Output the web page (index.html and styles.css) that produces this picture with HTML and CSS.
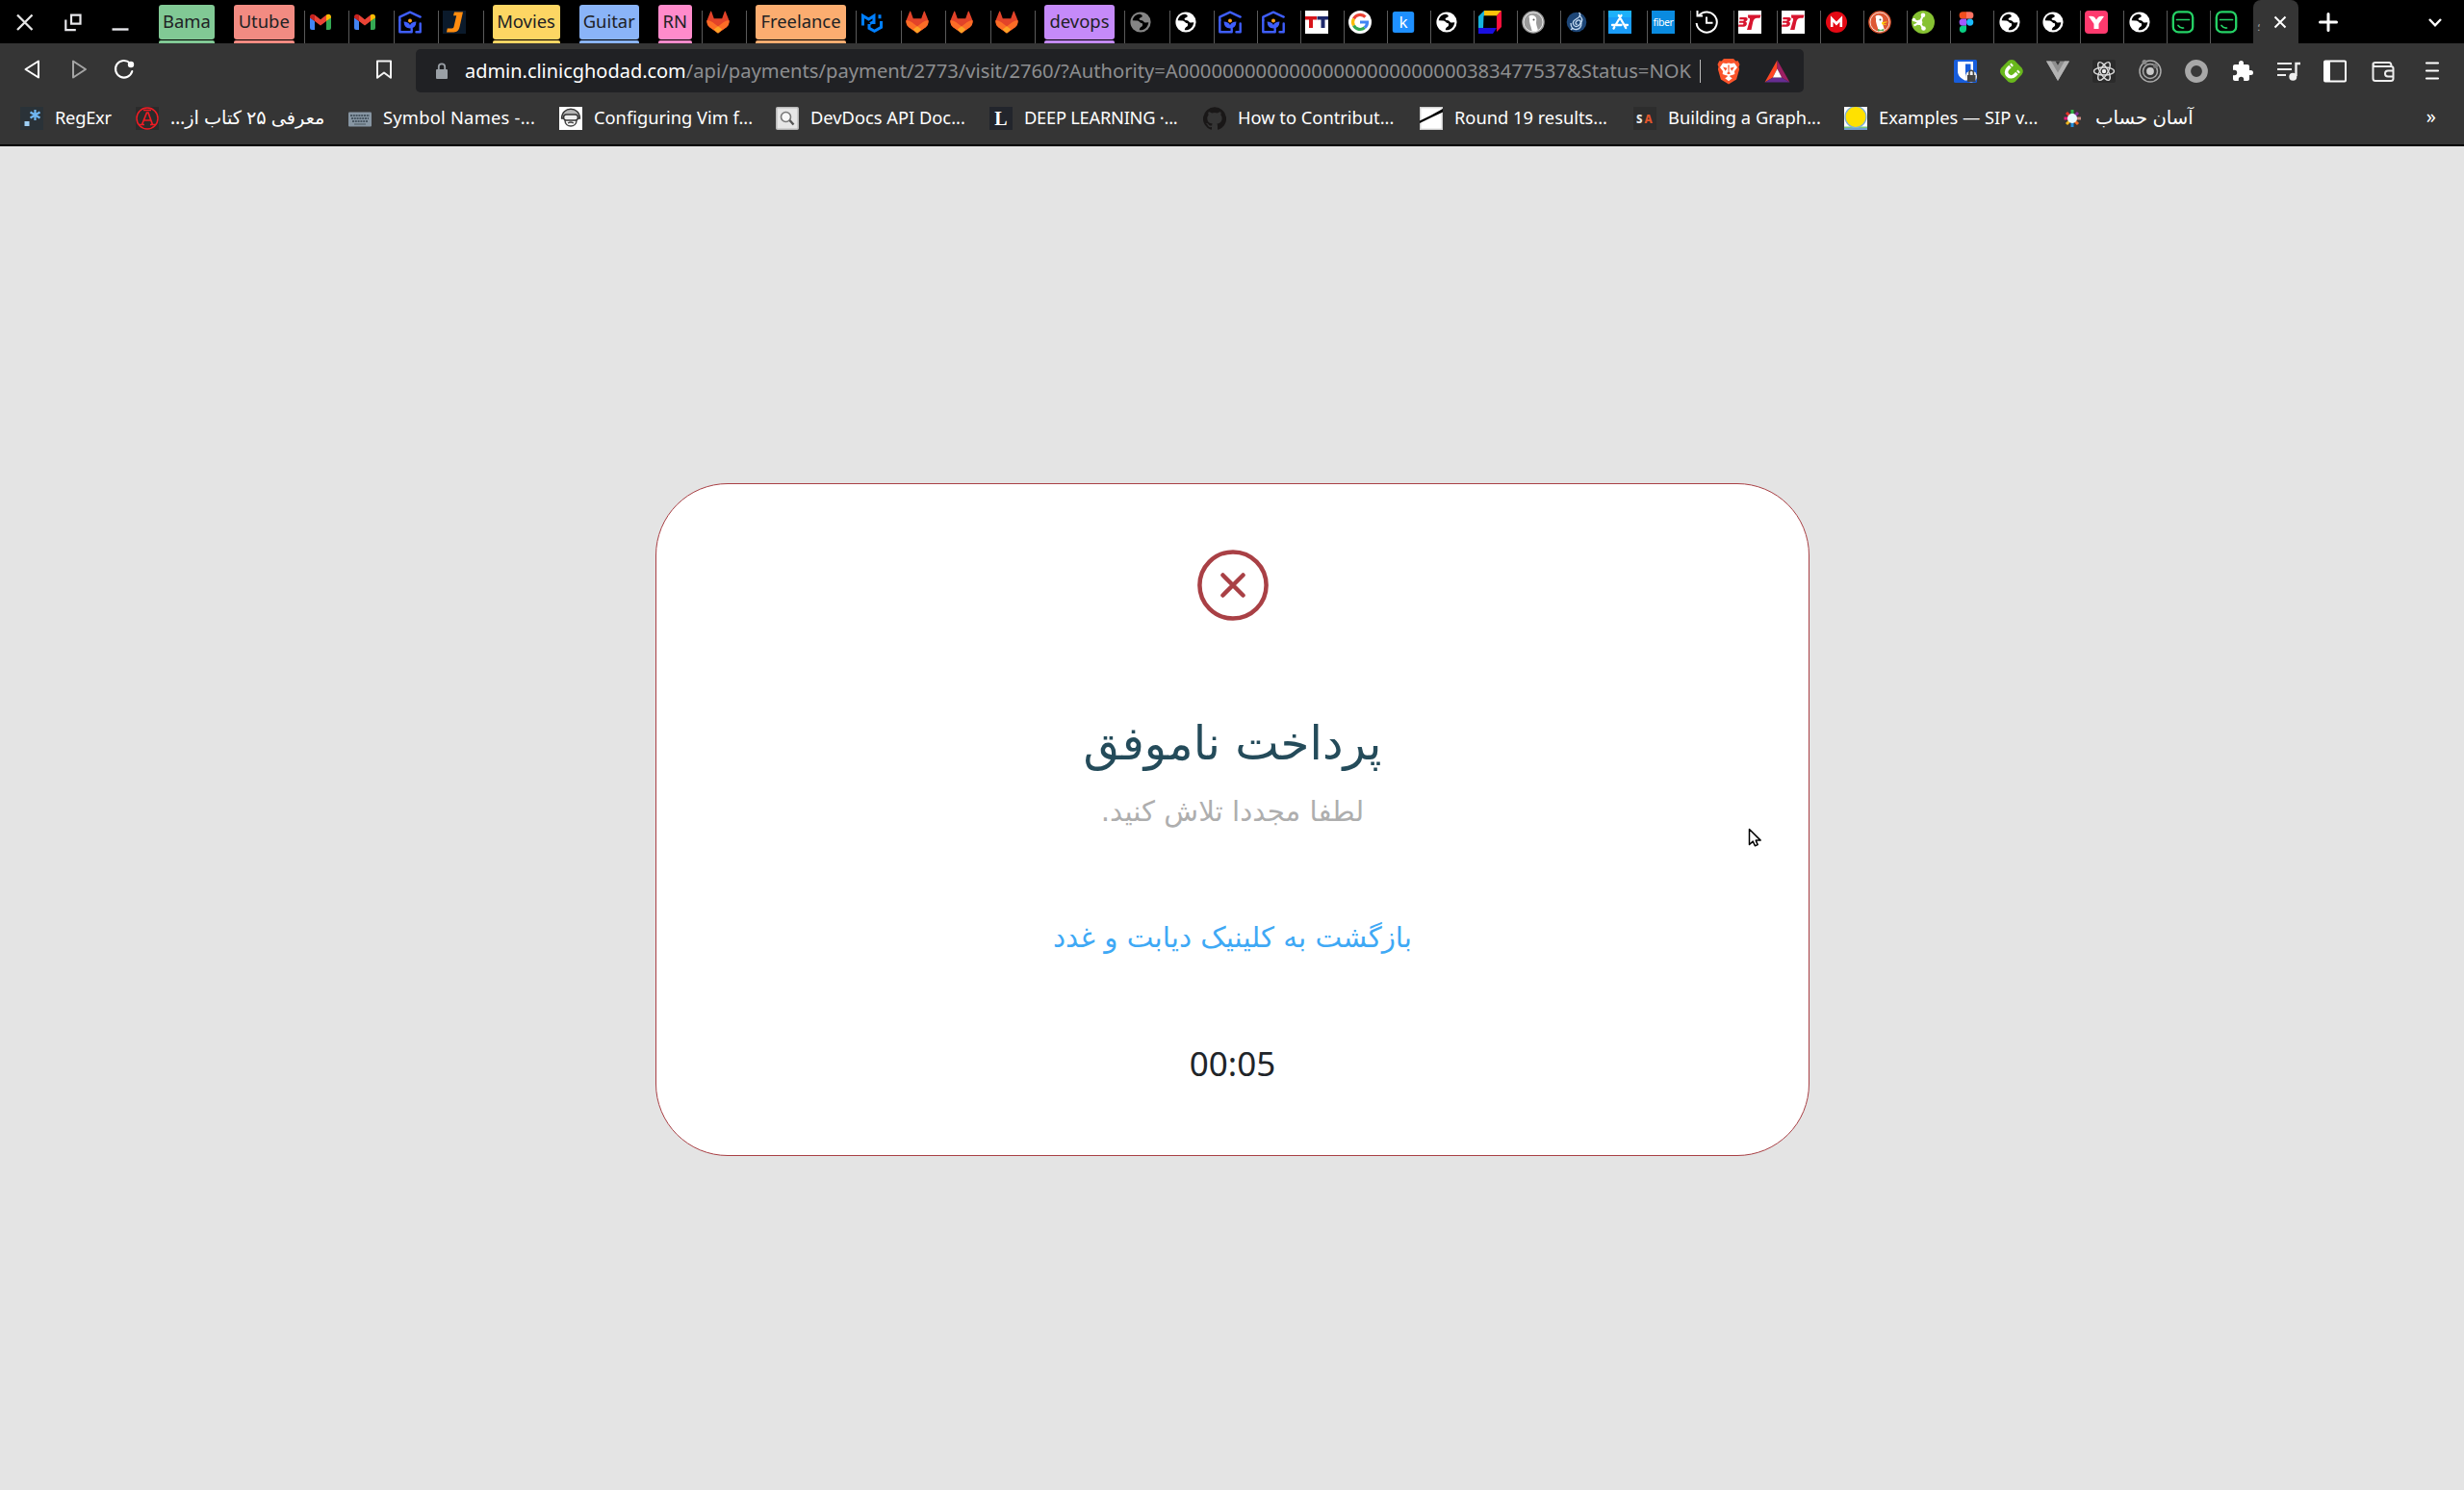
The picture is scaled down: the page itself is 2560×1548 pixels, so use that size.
FILE: index.html
```html
<!DOCTYPE html>
<html lang="en">
<head>
<meta charset="utf-8">
<title>پرداخت ناموفق</title>
<link rel="stylesheet" href="styles.css">
</head>
<body>
<svg class="sprite" aria-hidden="true">
  <symbol id="gmail" viewBox="0 0 24 24">
    <path fill="#4285f4" d="M1 7l5 4v9H3a2 2 0 0 1-2-2z"/>
    <path fill="#34a853" d="M18 11l5-4v11a2 2 0 0 1-2 2h-3z"/>
    <path fill="#c5221f" d="M1 6.5C1 4 4 3 6 4.6V11L1 7.4z"/>
    <path fill="#ea4335" d="M6 4.6l6 4.6 6-4.6V11l-6 4.6L6 11z"/>
    <path fill="#fbbc04" d="M18 4.6C20 3 23 4 23 6.5v.9L18 11z"/>
  </symbol>
  <symbol id="house" viewBox="0 0 24 24">
    <g fill="none" stroke="#3f5efb" stroke-width="2.4" stroke-linecap="round" stroke-linejoin="round">
      <path d="M1.300 10V6.600L12 1.600l10.700 5"/>
      <path d="M22.700 13.500v8.800h-4.200M1.300 10v12.300h12.400v-3.600"/>
    </g>
    <path fill="#3f5efb" d="M5.500 11.500q5 0 6.500 3.600 1.500-3.600 6.500-3.600-.5 7-6.500 7t-6.500-7z"/>
    <circle cx="12" cy="10.500" r="2" fill="#ff9f1c"/>
  </symbol>
  <symbol id="gitlab" viewBox="0 0 24 24">
    <path fill="#e24329" d="M.6 10L4.300.8Q4.800.2 5.200 1l2.600 7.200h8.400L18.800 1q.4-.8.9-.2L23.400 10q1 4-2.600 7.200L12 23.500l-8.800-6.300Q-.4 14 .6 10z"/>
    <path fill="#fc6d26" d="M.6 10q3.400.2 6 2.300L12 16.400l5.400-4.100q2.600-2.100 6-2.300 1 4.200-2.600 7.200L12 23.500l-8.800-6.300Q-.4 14 .6 10z"/>
    <path fill="#fca326" d="M7.800 19.500L12 16.300l4.200 3.200-4.200 4q-2-1.500-4.200-4z"/>
  </symbol>
  <symbol id="globe" viewBox="0 0 24 24">
    <circle cx="12" cy="12" r="10.600" fill="currentColor"/>
    <path fill="#000" d="M10.200 3.800C7 4 4.300 7 3.700 10.300l4.500.2c2.600 0 3 2.500 5 2.500.8 0 1 1 .9 2-.2 2-3 1.800-3.300 5.200 5 .6 9.200-3.400 9.500-8l-3.300.4c-1.800 0-1.600-2.200-3.500-2.300-2 0-3-.5-2.900-1.700.1-1.500 3-1 3.200-3.200-.2-1-1.800-1.600-3.600-1.600z"/>
  </symbol>
  <symbol id="bt" viewBox="0 0 24 24">
    <path fill="#fff" d="M0 0h24v24H0z"/>
    <path fill="#d8152f" d="M10 4.500h13.500l-1 3.200h-2.700c-2.500 0-3.800 1.600-4.500 4L13.500 20H9l2.700-9c.5-1.800 1-3.300-1.500-3.300zM1.500 7h6.300c3 0 2.200 4-.4 4.400 2.800.6 1.400 5.300-1.600 5.300H0l.4-2.200h4.200c1 0 1-1.700 0-1.700H.8l.4-2H5c1 0 1.200-1.600.2-1.600H1.200z"/>
  </symbol>
  <symbol id="chat" viewBox="0 0 24 24">
    <rect x="1.800" y="1.400" width="20.400" height="21" rx="5.500" fill="#000" stroke="#25d366" stroke-width="2.300"/>
    <path fill="none" stroke="#25d366" stroke-width="1.700" stroke-linecap="round" d="M5.500 9.500h13M7 15.500q2 2.800 5.500 2.500"/>
  </symbol>
  <symbol id="duck" viewBox="0 0 24 24">
    <circle cx="12" cy="12" r="11.800" fill="currentColor"/>
    <circle cx="12" cy="12" r="10" fill="none" stroke="#fff" stroke-opacity=".8"/>
    <path fill="#fff" d="M7.500 6c2-2 6-1.600 7.500 1.600.8 2-.2 4 .1 6 .3 2.500 1.400 4.500 1.700 6.600-2 1.200-4 1.600-6 1.200C9.500 16 7.500 12 8 8.500z"/>
    <circle cx="12.500" cy="9.500" r="1" fill="#555"/>
  </symbol>
</svg>

<header class="browser">
  <nav class="tabstrip">
    <div class="window-buttons">
      <svg class="wbtn" viewBox="0 0 20 20"><path d="M2 2.500l15.500 15.500M17.500 2.500L2 18" stroke="#e6e6e6" stroke-width="2.300"/></svg>
      <svg class="wbtn" viewBox="0 0 20 20"><path d="M8 2.700h9.500v9H8zM2.300 7.500v10.700h10.500" fill="none" stroke="#e6e6ea" stroke-width="2.200"/></svg>
      <svg class="wbtn" viewBox="0 0 20 20"><path d="M1.500 17.500h17" stroke="#e6e6ea" stroke-width="2.400"/></svg>
    </div>
    <div class="group green"><span class="label w58">Bama</span></div>
    <div class="group red"><span class="label w63">Utube</span></div>
    <div class="tab wide"><svg class="fav"><use href="#gmail"/></svg></div>
    <div class="tab wide"><svg class="fav"><use href="#gmail"/></svg></div>
    <div class="tab wide"><svg class="fav"><use href="#house"/></svg></div>
    <div class="tab wide"><svg class="fav" viewBox="0 0 24 24"><path fill="#0b1a2b" d="M0 0h24v24H0z"/><path fill="#ff8c0f" d="M12 1.500h9L17.500 17c-1 4.500-3.500 5.500-7.500 5.500H4l.8-4h4.500c1.500 0 2-.7 2.400-2.500l2.500-10.700H11z"/></svg></div>
    <div class="group yellow divided"><span class="label w70">Movies</span></div>
    <div class="group blue"><span class="label w63">Guitar</span></div>
    <div class="group pink"><span class="label w35">RN</span></div>
    <div class="tab wide"><svg class="fav"><use href="#gitlab"/></svg></div>
    <div class="group orange divided"><span class="label w94">Freelance</span></div>
    <div class="tab wide"><svg class="fav" viewBox="0 0 24 24"><path fill="none" stroke="#007fff" stroke-width="3" d="M2.500 15.500V5.500l6 3.600 5.500-3.600v8.500M9 14v4.300l5.500 3 7-4V11M20 4.200v4M10 13.500l4-2.200"/></svg></div>
    <div class="tab wide"><svg class="fav"><use href="#gitlab"/></svg></div>
    <div class="tab wide"><svg class="fav"><use href="#gitlab"/></svg></div>
    <div class="tab wide"><svg class="fav"><use href="#gitlab"/></svg></div>
    <div class="group purple divided"><span class="label w73">devops</span></div>
    <div class="tab wide"><svg class="fav dim"><use href="#globe"/></svg></div>
    <div class="tab wide"><svg class="fav"><use href="#globe"/></svg></div>
    <div class="tab"><svg class="fav"><use href="#house"/></svg></div>
    <div class="tab"><svg class="fav"><use href="#house"/></svg></div>
    <div class="tab"><svg class="fav" viewBox="0 0 24 24"><path fill="#fff" d="M0 0h24v24H0z"/><path fill="#d7141a" d="M0 6h12v3.500H8V18H4V9.500H0z"/><path fill="#1f2a6b" d="M12.500 6H24v3.500h-3.500V18h-4V9.500h-4z"/></svg></div>
    <div class="tab"><svg class="fav" viewBox="0 0 24 24"><circle cx="12" cy="12" r="12" fill="#fff"/><g fill="none" stroke-width="3.200"><path stroke="#ea4335" d="M5.500 8.400A7.500 7.500 0 0 1 17.500 6.700"/><path stroke="#fbbc05" d="M5.500 15.600a7.500 7.500 0 0 1 0-7.200"/><path stroke="#34a853" d="M16.800 17.800A7.500 7.500 0 0 1 5.500 15.600"/><path stroke="#4285f4" d="M12 12h7.500a7.500 7.500 0 0 1-2.700 5.800"/></g></svg></div>
    <div class="tab"><svg class="fav" viewBox="0 0 24 24"><rect x=".8" y="1" width="22.400" height="22" rx="2.500" fill="#1e90ff"/><text x="12" y="18" text-anchor="middle" font-size="17" fill="#fff">k</text></svg></div>
    <div class="tab"><svg class="fav"><use href="#globe"/></svg></div>
    <div class="tab"><svg class="fav" viewBox="0 0 24 24"><path fill="#ffc20a" d="M6 0h18l-5 5.500H6z"/><path fill="#ff0f3c" d="M24 0v17l-5 5V5.500z"/><path fill="#16b3dc" d="M0 6l6-6v5.500L5 18H0z"/><path fill="#1a0fe0" d="M0 18h19l-4 6H0z"/><path fill="#000" d="M5.500 5.500h13V18h-13z"/></svg></div>
    <div class="tab"><svg class="fav duck-dim"><use href="#duck"/></svg></div>
    <div class="tab"><svg class="fav" viewBox="0 0 24 24"><circle cx="12" cy="12" r="10.300" fill="#1d4677"/><path fill="none" stroke="#c6dcf2" stroke-width="1.300" d="M14.500 2c3 3 0 5-2.500 6.500S7 12 9 15s6 1 7-2-2-4-4-2-1 4 1 3M14.500 5c3 2 4 5 2 8M6 13c0 4 2 7 6 6.500s5-4 5-7M8 18l-2 2"/></svg></div>
    <div class="tab"><svg class="fav" viewBox="0 0 24 24"><path fill="#1a9cf8" d="M0 0h24v24H0z"/><path fill="#1fbffb" d="M0 0h24v7H0z" opacity=".6"/><path fill="none" stroke="#fff" stroke-width="2.300" stroke-linecap="round" d="M13.500 5L7.800 14.500M10.800 5l7.400 13M4 15h9.500M17.500 15H20M6.300 17.200l-.8 1.400"/></svg></div>
    <div class="tab"><svg class="fav" viewBox="0 0 24 24"><path fill="#0a8be0" d="M0 0h24v24H0z"/><text x="12" y="16" text-anchor="middle" font-size="10.500" letter-spacing="-.4" fill="#fff">fiber</text></svg></div>
    <div class="tab"><svg class="fav" viewBox="0 0 24 24"><path fill="none" stroke="#fff" stroke-width="2" d="M4.200 5A10.600 10.600 0 1 1 1.600 13M2.500 0v5.500H8M12 6.500v6.200h6.500"/></svg></div>
    <div class="tab"><svg class="fav"><use href="#bt"/></svg></div>
    <div class="tab"><svg class="fav"><use href="#bt"/></svg></div>
    <div class="tab"><svg class="fav" viewBox="0 0 24 24"><circle cx="12" cy="12" r="11" fill="#e50914"/><path fill="none" stroke="#fff" stroke-width="2.600" d="M7.200 17V8.500l4.800 5 4.800-5V17"/></svg></div>
    <div class="tab"><svg class="fav duck-red" viewBox="0 0 24 24"><use href="#duck"/><path fill="#fdd20a" d="M14 12.200c2-.6 4-1 6-.6-1 1.200-3 1.500-4.500 1.700 1 .7 2.500.6 3.500 1.200-2 .7-4.500.3-5-.8z"/><path fill="#4caf50" d="M10 19l3 1 3-1v2.500l-3-.8-3 .8z"/></svg></div>
    <div class="tab"><svg class="fav" viewBox="0 0 24 24"><circle cx="12" cy="12" r="12" fill="#86c232"/><path stroke="#fff" stroke-width="2" fill="none" d="M12 5L8.500 12.500l4 6.500M1.500 9.500l7 3-6 3"/><g fill="#fff"><circle cx="12" cy="4.800" r="2.300"/><circle cx="12.500" cy="18.500" r="2.300"/><circle cx="8.500" cy="12.300" r="2.800"/><circle cx="2.500" cy="9.500" r="1.800"/></g></svg></div>
    <div class="tab"><svg class="fav" viewBox="0 0 24 24"><path fill="#f24e1e" d="M12 1.300H8.200a3.600 3.600 0 0 0 0 7.200H12z"/><path fill="#ff7262" d="M12 1.300h3.800a3.600 3.600 0 0 1 0 7.200H12z"/><path fill="#a259ff" d="M12 8.500H8.200a3.600 3.600 0 0 0 0 7.200H12z"/><circle cx="15.700" cy="12.100" r="3.600" fill="#1abcfe"/><path fill="#0acf83" d="M12 15.700H8.200a3.600 3.600 0 1 0 3.800 3.600z"/></svg></div>
    <div class="tab"><svg class="fav"><use href="#globe"/></svg></div>
    <div class="tab"><svg class="fav"><use href="#globe"/></svg></div>
    <div class="tab"><svg class="fav" viewBox="0 0 24 24"><rect width="24" height="24" rx="4" fill="#fe3a6e"/><path fill="#fff" d="M4 6q4-.5 6 .8l2 2.700 2-2.700q2-1.300 6-.8l-5.500 7.700V19h-5v-5.300z"/></svg></div>
    <div class="tab"><svg class="fav"><use href="#globe"/></svg></div>
    <div class="tab"><svg class="fav"><use href="#chat"/></svg></div>
    <div class="tab"><svg class="fav"><use href="#chat"/></svg></div>
    <div class="tab active"><span class="tab-title">؛</span><svg class="close" viewBox="0 0 14 14"><path d="M1.500 1.500l11 11M12.500 1.500l-11 11" stroke="#fff" stroke-width="2"/></svg></div>
    <svg class="plus" viewBox="0 0 20 20"><path d="M10 1.500v17M1.500 10h17" stroke="#fff" stroke-width="3" stroke-linecap="round"/></svg>
    <svg class="chevron" viewBox="0 0 16 16"><path d="M2 5l6 6.300L14 5" fill="none" stroke="#fff" stroke-width="2.400"/></svg>
  </nav>

  <div class="toolbar">
    <div class="nav-buttons">
      <svg class="ico" viewBox="0 0 24 24"><path d="M18 3.500v17L4.500 12z" fill="none" stroke="#fff" stroke-width="2" stroke-linejoin="round"/></svg>
      <svg class="ico" viewBox="0 0 24 24"><path d="M6 3.500v17L19 12z" fill="none" stroke="#a5a5a5" stroke-width="2" stroke-linejoin="round"/></svg>
      <svg class="ico" viewBox="0 0 24 24"><path d="M18 5.500A8.800 8.800 0 1 0 20.300 14" fill="none" stroke="#fff" stroke-width="2.100" stroke-linecap="round"/><circle cx="19" cy="7" r="3.200" fill="#fff"/></svg>
    </div>
    <svg class="ico save" viewBox="0 0 24 24"><path d="M5 3.500h14v17.300l-7-5.300-7 5.300z" fill="none" stroke="#f4f4f4" stroke-width="2" stroke-linejoin="round"/></svg>
    <div class="address">
      <svg class="lock" viewBox="0 0 14 18"><rect x="1" y="7" width="12" height="10" rx="1" fill="#9aa0a6"/><path d="M3.800 7V4.500a3.200 3.200 0 0 1 6.400 0V7" fill="none" stroke="#9aa0a6" stroke-width="1.800"/></svg>
      <div class="url"><span class="host">admin.clinicghodad.com</span><span class="path">/api/payments/payment/2773/visit/2760/?Authority=A00000000000000000000000000383477537&amp;Status=NOK</span></div>
      <div class="badges">
        <svg class="brave" viewBox="0 0 24 28"><path fill="#fb542b" d="M7 1h10l2.500 2.500 2.200-.2L23.500 7l-1 2.500.6 2.500-3 10.500L12 27.500 3.900 22.500.9 12l.6-2.500-1-2.500 1.800-3.700 2.200.2z"/><path fill="#fff" d="M6 5.500l3.500.5 2.500-.6 2.500.6 3.500-.5 3 4.500-3 4 .3 3-4 1.500-1 1.200 2.500 1.500-3.800 3-3.800-3 2.500-1.500-1-1.200-4-1.500.3-3-3-4z"/><path fill="#fb542b" d="M6 9.500l4.500 1.200-1.800 3zM18 9.500l-4.500 1.200 1.800 3zM11.300 7.500h1.400l-.3 7 1.600 1.800-2 1-2-1 1.600-1.800zM9 18l2 .8-1 1zM15 18l-2 .8 1 1z"/></svg>
        <svg class="bat" viewBox="0 0 26 24"><path fill="#ff4724" d="M13 .5v8.800L8.500 18.500 0 23.500z"/><path fill="#9e1f63" d="M13 .5l13 23-8.500-5L13 9.300z"/><path fill="#662d91" d="M0 23.500l8.500-5h9l8.500 5z"/><path fill="#fff" d="M13 9.500l4.600 9H8.400z"/></svg>
      </div>
    </div>
    <div class="extensions">
      <svg class="ico" viewBox="0 0 24 24"><rect width="24" height="24" rx="1.500" fill="#175ddc"/><path fill="#fff" d="M4 2h16v10c0 5-3.500 7.500-8 9.800C7.500 19.500 4 17 4 12z"/><path fill="#175ddc" d="M12 4.500h5.500v7c0 3-2 5-5.500 7z"/><circle cx="18" cy="17.500" r="6" fill="#eee"/><path fill="#444" d="M14 16h8.500v7H14z"/><path d="M16 16v-2.500a2.200 2.200 0 0 1 4.400 0V16" fill="none" stroke="#444" stroke-width="1.500"/></svg>
      <svg class="ico" viewBox="0 0 24 24"><path fill="#69b81c" d="M9 .8q3-1.600 6 0l7.500 7.700q2.600 3.500 0 7L15.500 23q-3.500 2-7 0L1.300 15.500q-2.600-3.500 0-7z"/><path d="M10.500 7L8.200 9.300c-5 5 2.500 11.500 7 7l2.300-2.300" fill="none" stroke="#fff" stroke-width="3.600"/><path d="M11.300 6.200l1.400-1.400M18.300 13.200l1.400-1.400" stroke="#fff" stroke-width="3.400"/></svg>
      <svg class="ico" viewBox="0 0 24 24"><path fill="#8e8e8e" d="M0 1.500h24L12 22z"/><path fill="#b3b3b3" d="M0 1.500h5l7 12 7-12h5L12 22z"/><path fill="#353535" d="M9.500 1.500h5L12 5.700z"/></svg>
      <svg class="ico" viewBox="0 0 24 24"><rect width="24" height="24" rx="2" fill="#2b2b2b"/><g fill="none" stroke="#dcdcdc" stroke-width="1.400"><ellipse cx="12" cy="12" rx="10.500" ry="4"/><ellipse cx="12" cy="12" rx="10.500" ry="4" transform="rotate(60 12 12)"/><ellipse cx="12" cy="12" rx="10.500" ry="4" transform="rotate(120 12 12)"/></g><circle cx="12" cy="12" r="2.200" fill="#eee"/></svg>
      <svg class="ico" viewBox="0 0 24 24"><g fill="none" stroke="#a9a9a9" stroke-width="1.500"><circle cx="12" cy="12" r="11"/><circle cx="12" cy="12" r="7.500"/></g><circle cx="12" cy="12" r="3.900" fill="#c9c9c9"/><circle cx="6" cy="2.500" r="2.500" fill="#8b8b8b"/><circle cx="17.500" cy="6.500" r="2.500" fill="#777"/></svg>
      <svg class="ico" viewBox="0 0 24 24"><circle cx="12" cy="12" r="8.900" fill="#393939" stroke="#a8a8a8" stroke-width="6"/></svg>
      <svg class="ico" viewBox="0 0 24 24"><path fill="#fff" d="M20.500 11H19V7c0-1.100-.9-2-2-2h-4V3.500a2.500 2.500 0 0 0-5 0V5H4c-1.100 0-2 .9-2 2v3.800h1.500a2.700 2.700 0 0 1 0 5.400H2V20c0 1.100.9 2 2 2h3.800v-1.500a2.700 2.700 0 0 1 5.400 0V22H17c1.100 0 2-.9 2-2v-4h1.500a2.500 2.500 0 0 0 0-5z"/></svg>
      <svg class="ico" viewBox="0 0 24 24"><path d="M0 4h15M0 10h15M0 16h9" stroke="#eee" stroke-width="2"/><path d="M24 4h-4.500v13" fill="none" stroke="#eee" stroke-width="2.400"/><circle cx="16.300" cy="17.800" r="4" fill="#eee"/></svg>
      <svg class="ico" viewBox="0 0 24 24"><rect x="1" y="1.600" width="22" height="21" rx="1" fill="none" stroke="#fff" stroke-width="2"/><path fill="#fff" d="M1 1.600h6v21H1z"/></svg>
      <svg class="ico wallet" viewBox="0 0 24 24"><path d="M1.500 4.500v15q0 2.500 2.500 2.500h16q2.500 0 2.500-2.500V9q0-2-2.500-2H4Q1.500 7 1.500 4.500 1.500 3 4 3h14q2.500 0 2.500 4M22.500 11.500H17a3 3 0 0 0 0 6h5.500" fill="none" stroke="#eee" stroke-width="2"/></svg>
      <svg class="ico menu" viewBox="0 0 24 24"><path d="M6 3.500h12M6 11.500h12M6 19.500h12" stroke="#fff" stroke-width="2.200" stroke-linecap="round"/></svg>
    </div>
  </div>

  <div class="bookmarks">
    <div class="bm w120"><svg class="fav" viewBox="0 0 24 24"><path fill="#2a3238" d="M0 0h24v24H0z"/><path d="M15.500 3v11M10.500 5.500l10 6M20.500 5.500l-10 6" stroke="#70b7f2" stroke-width="2.200"/><path fill="#9ed0f7" d="M4.500 15h5v5h-5z"/></svg><span class="tight">RegExr</span></div>
    <div class="bm w221"><svg class="fav" viewBox="0 0 24 24"><path fill="#2b2b2b" d="M0 0h24v24H0z"/><circle cx="12" cy="12" r="11" fill="none" stroke="#f01c24" stroke-width="1.500"/><path d="M6.500 18.500L11.500 6h1.500l4.500 12.500M4 18.500h5M15 18.500h5M8 14h8.500M8 3.500h8" fill="none" stroke="#f01c24" stroke-width="1.700"/></svg><span class="fa" dir="rtl">معرفی ۲۵ کتاب از…</span></div>
    <div class="bm w219"><svg class="fav" viewBox="0 0 24 24"><rect y="5.500" width="24" height="15" rx="1" fill="#8796a3"/><path d="M2 9h20M3 12h18M4 15h16" stroke="#35424d" stroke-width="1.700" stroke-dasharray="2 .8"/><path d="M6 18h12" stroke="#5c6872" stroke-width="1.300"/></svg><span class="loose">Symbol Names -...</span></div>
    <div class="bm w225"><svg class="fav" viewBox="0 0 24 24"><path fill="#fff" d="M0 0h24v24H0z"/><path d="M2.500 12C2.500-1 21.500-1 21.500 12z" fill="#b5b5b5" stroke="#333" stroke-width="1.300"/><rect x="4.500" y="8" width="15" height="6" rx="3" fill="#eee" stroke="#333" stroke-width="1.500"/><path d="M6 14c0 8 12 8 12 0M9 17q3-2 6 0" fill="none" stroke="#444" stroke-width="1.500"/></svg><span>Configuring Vim f...</span></div>
    <div class="bm w222"><svg class="fav" viewBox="0 0 24 24"><rect x=".8" y=".8" width="22.400" height="22.400" rx="1" fill="#e6e6e6" stroke="#b9b9b9" stroke-width="1.600"/><circle cx="10.500" cy="10.500" r="5" fill="#f7f7f7" stroke="#777" stroke-width="1.600"/><path d="M14.500 14l4 4.500" stroke="#555" stroke-width="2.400"/></svg><span>DevDocs API Doc...</span></div>
    <div class="bm w222"><svg class="fav" viewBox="0 0 24 24"><path fill="#22252c" d="M0 0h24v24H0z"/><text class="serif" x="12" y="19" text-anchor="middle" font-size="20" font-weight="700" fill="#fff">L</text></svg><span class="tight">DEEP LEARNING ·...</span></div>
    <div class="bm w225"><svg class="fav" viewBox="0 0 24 24"><path fill="#191717" d="M12 .3a12 12 0 0 0-3.800 23.400c.6.1.8-.3.8-.6v-2c-3.300.7-4-1.600-4-1.600-.6-1.400-1.400-1.800-1.400-1.800-1-.7.1-.7.1-.7 1.200 0 1.900 1.200 1.900 1.200 1 1.800 2.800 1.300 3.500 1 0-.8.400-1.300.7-1.600-2.700-.3-5.500-1.300-5.500-6 0-1.200.5-2.300 1.300-3.100-.2-.4-.6-1.600 0-3.200 0 0 1-.3 3.400 1.200a11.500 11.500 0 0 1 6 0c2.300-1.500 3.300-1.200 3.300-1.200.6 1.600.2 2.800 0 3.200.9.8 1.300 1.900 1.300 3.200 0 4.600-2.800 5.600-5.500 5.900.5.400.9 1 .9 2.200v3.300c0 .3.1.7.8.6A12 12 0 0 0 12 .3"/></svg><span>How to Contribut...</span></div>
    <div class="bm w222"><svg class="fav" viewBox="0 0 24 24"><rect x=".7" y=".7" width="22.600" height="22.600" fill="#fff" stroke="#cfcfcf" stroke-width="1.400"/><path fill="#000" d="M0 14.500Q12 9 24 2v3.500Q12 11 0 17z"/></svg><span>Round 19 results...</span></div>
    <div class="bm w219"><svg class="fav" viewBox="0 0 24 24"><path fill="#2d2d2d" d="M0 0h24v24H0z"/><text x="3" y="16.500" font-size="11.500" font-weight="800" fill="#e8e8e8">S</text><text x="11.500" y="16.500" font-size="11.500" font-weight="800" fill="#e2562b">A</text></svg><span>Building a Graph...</span></div>
    <div class="bm w225"><svg class="fav" viewBox="0 0 24 24"><path fill="#fff" d="M0 0h24v24H0z"/><path fill="#6f9fd0" d="M0 21h24v3H0z"/><path fill="#77c878" d="M0 20.500h24V22H0z"/><circle cx="12" cy="10.500" r="11" fill="#ffe100" stroke="#7faedb" stroke-width="1.200"/></svg><span>Examples — SIP v...</span></div>
    <div class="bm"><svg class="fav" viewBox="0 0 24 24"><g stroke-width="3"><path stroke="#35b44a" d="M12 12V3"/><path stroke="#8e2c9b" d="M12 12l6-6"/><path stroke="#c98b7f" d="M12 12h9"/><path stroke="#f36b21" d="M12 12l6 6"/><path stroke="#1f8fe0" d="M12 12v9"/><path stroke="#f0b51c" d="M12 12l-6 6"/><path stroke="#ea1e79" d="M12 12H3.500"/><path stroke="#e8322b" d="M12 12L6 6"/></g><circle cx="12" cy="12" r="5" fill="#eafaff"/></svg><span class="fa last" dir="rtl">آسان حساب</span></div>
    <span class="overflow">»</span>
  </div>
</header>

<main class="page">
  <section class="card" dir="rtl">
    <svg class="status" viewBox="0 0 74 74"><circle cx="37" cy="37" r="34.600" fill="none" stroke="#a94045" stroke-width="4.500"/><path d="M26.500 26.500l21 21M47.500 26.500l-21 21" stroke="#a94045" stroke-width="4.500" stroke-linecap="round"/></svg>
    <h1>پرداخت ناموفق</h1>
    <p class="hint">لطفا مجددا تلاش کنید.</p>
    <a class="back">بازگشت به کلینیک دیابت و غدد</a>
    <div class="counter">00:05</div>
  </section>
</main>
<svg class="cursor" viewBox="0 0 16 22"><path d="M1.500 1.500v16l3.700-3.400 2.200 4.700 2.800-1.200-2-4.500h5z" fill="#fff" stroke="#000" stroke-width="1.500" stroke-linejoin="round"/></svg>
</body>
</html>
```
FILE: styles.css
```css
* { box-sizing: border-box; }

body {
  margin: 0;
  width: 2560px;
  height: 1548px;
  display: flex;
  flex-direction: column;
  overflow: hidden;
  background: #e4e4e4;
  color: #fff;
  font-family: "Noto Sans", "DejaVu Sans", sans-serif;
}

svg { display: block; flex: none; }
text { font-family: "Noto Sans", sans-serif; }
text.serif { font-family: "Liberation Serif", serif; }
.sprite { position: absolute; width: 0; height: 0; }

.browser {
  flex: none;
  height: 152px;
  border-bottom: 2px solid #000;
  background: #353535;
}

/* Tab strip */
.tabstrip {
  display: flex;
  height: 45px;
  background: #000;
}
.window-buttons {
  display: flex;
  gap: 29px;
  width: 155px;
  padding: 13px 0 0 16px;
}
.wbtn { width: 20px; height: 20px; }
.wbtn:nth-child(2) { margin-left: 1px; }
.group {
  position: relative;
  padding: 5px 10px 0;
}
.label {
  display: block;
  height: 36px;
  border-radius: 3px;
  background: var(--tint);
  color: #202124;
  font-size: 18.4px;
  line-height: 34px;
  text-align: center;
}
.group::after {
  content: "";
  display: block;
  height: 3px;
  margin-top: 1px;
  border-radius: 2px 2px 0 0;
  background: var(--tint);
}
.green { --tint: #81c995; }
.red { --tint: #f28b82; }
.yellow { --tint: #fdd663; }
.blue { --tint: #8ab4f8; }
.pink { --tint: #ff8bcb; }
.orange { --tint: #fcad70; }
.purple { --tint: #c58af9; }
.w58 { width: 58px; }
.w63 { width: 62.5px; }
.w70 { width: 70px; }
.w35 { width: 34.5px; }
.w94 { width: 94px; }
.w73 { width: 73px; }

.tab {
  position: relative;
  width: 45px;
  padding: 11px 0 0 5px;
}
.wide { width: 46.5px; }
.tab::before,
.divided::before {
  content: "";
  position: absolute;
  left: 0;
  top: 11px;
  width: 1px;
  height: 34px;
  background: #5a5a5a;
}
.fav { width: 24px; height: 24px; }
.dim { color: #858585; }
.duck-dim { color: #9a9a9a; }
.duck-red { color: #de5833; }

.active {
  display: flex;
  gap: 12px;
  width: 47px;
  padding: 16px 0 0 4px;
  border-radius: 8px 8px 0 0;
  background: #353535;
}
.active::before { display: none; }
.tab-title {
  width: 5px;
  height: 20px;
  color: #aaa;
  font-size: 11px;
  line-height: 24px;
}
.close { width: 14px; height: 14px; }
.plus { width: 20px; height: 20px; margin: 13px 0 0 21px; }
.chevron { width: 16px; height: 16px; margin: 15px 22px 0 auto; }

/* Toolbar */
.toolbar {
  display: flex;
  align-items: center;
  height: 51px;
  padding: 6px 0 0 22px;
}
.nav-buttons { display: flex; gap: 23.5px; margin-top: -3px; }
.ico { width: 24px; height: 24px; }
.save { margin: -3px 21px 0 246px; }
.address {
  display: flex;
  align-items: center;
  width: 1442px;
  height: 45px;
  border-radius: 5px;
  background: #202124;
}
.lock { width: 14px; height: 18px; margin: 0 17px 0 20px; }
.url { width: 1283px; white-space: nowrap; line-height: 42px; }
.host { font-size: 19.95px; }
.path { color: #8d8e90; font-size: 20.19px; }
.badges {
  display: flex;
  align-items: center;
  gap: 25px;
  height: 24px;
  padding-left: 17px;
  border-left: 1px solid #b8b8b8;
}
.brave { width: 24px; height: 28px; }
.bat { width: 27px; height: 24px; }
.extensions {
  display: flex;
  gap: 24px;
  margin: 0 0 0 156px;
}
.wallet { margin-left: 2px; }
.menu { margin-left: 3px; }

/* Bookmarks bar */
.bookmarks {
  display: flex;
  align-items: center;
  height: 54px;
  padding-left: 21px;
  font-size: 18.3px;
  line-height: 24px;
  white-space: nowrap;
}
.bm { display: flex; align-items: center; gap: 12px; }
.bm span { margin-top: -3px; }
.w120 { width: 120px; }
.w221 { width: 221px; }
.w219 { width: 219px; }
.w222 { width: 222px; }
.w225 { width: 225px; }
.tight { letter-spacing: -0.25px; }
.loose { letter-spacing: 0.25px; }
.fa { font-size: 19.3px; }
.last { font-size: 19.7px; }
.overflow { margin: -4px 29px 0 auto; font-size: 20px; }

/* Payment result */
.page {
  flex: 1;
  display: flex;
  justify-content: center;
  padding-top: 350px;
}
.card {
  display: flex;
  flex-direction: column;
  align-items: center;
  width: 1199px;
  height: 699px;
  margin-left: 1px;
  padding-top: 68px;
  border: 1px solid #a94045;
  border-radius: 75px;
  background: #fff;
  font-family: "DejaVu Sans", sans-serif;
}
.status { width: 74px; height: 74px; }
.card h1 {
  margin: 97px 0 0;
  color: #244b5a;
  font-size: 48.3px;
  font-weight: 400;
  line-height: 60px;
}
.hint {
  margin: 21px 0 0;
  color: #aeaeae;
  font-size: 29.3px;
  line-height: 40px;
}
.back {
  margin-top: 91px;
  color: #3fa9f5;
  font-size: 29.4px;
  line-height: 40px;
}
.counter {
  margin-top: 87px;
  color: #212529;
  font-family: "Noto Sans", sans-serif;
  font-size: 35px;
  line-height: 48px;
}

.cursor {
  position: absolute;
  left: 1816px;
  top: 860px;
  width: 16px;
  height: 22px;
}
```
